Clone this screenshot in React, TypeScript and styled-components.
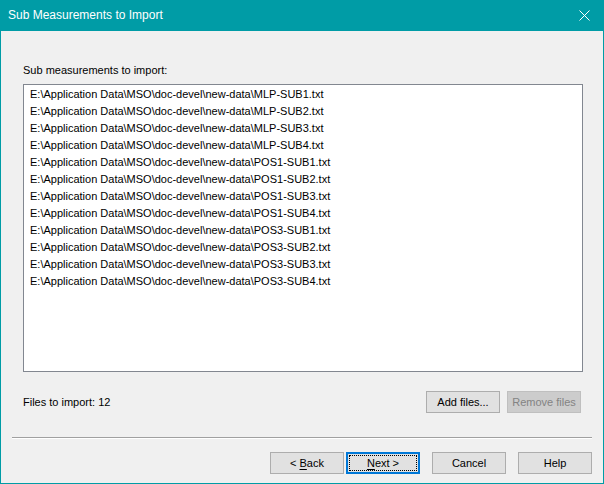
import React from "react";
import styled, { createGlobalStyle, css } from "styled-components";

const GlobalStyle = createGlobalStyle`
    html, body {
        margin: 0;
        padding: 0;
        background: #f0f0f0;
    }
    * {
        box-sizing: border-box;
    }
`;

const files = [
    "MLP-SUB1.txt",
    "MLP-SUB2.txt",
    "MLP-SUB3.txt",
    "MLP-SUB4.txt",
    "POS1-SUB1.txt",
    "POS1-SUB2.txt",
    "POS1-SUB3.txt",
    "POS1-SUB4.txt",
    "POS3-SUB1.txt",
    "POS3-SUB2.txt",
    "POS3-SUB3.txt",
    "POS3-SUB4.txt",
];

const basePath = "E:\\Application Data\\MSO\\doc-devel\\new-data\\";

export default function App() {
    return (
        <>
            <GlobalStyle />
            <Window>
                <TitleBar>
                    <Title>Sub Measurements to Import</Title>
                    <CloseButton>
                        <svg width="11" height="11" viewBox="0 0 11 11">
                            <path d="M0.5 0.5 L10.5 10.5 M10.5 0.5 L0.5 10.5" stroke="#ffffff" strokeWidth="1" fill="none" />
                        </svg>
                    </CloseButton>
                </TitleBar>
                <Body>
                    <Label>Sub measurements to import:</Label>
                    <ListBox>
                        {files.map((f) => (
                            <ListItem key={f}>{basePath + f}</ListItem>
                        ))}
                    </ListBox>
                    <FilesRow>
                        <Label>Files to import: 12</Label>
                        <ButtonGroup>
                            <Button>Add files...</Button>
                            <Button disabled>Remove files</Button>
                        </ButtonGroup>
                    </FilesRow>
                    <Separator />
                    <Footer>
                        <Button>
                            &lt;&nbsp;<u>B</u>ack
                        </Button>
                        <Button $focused>
                            <FocusRing>
                                <u>N</u>ext&nbsp;&gt;
                            </FocusRing>
                        </Button>
                        <Button $spaced>Cancel</Button>
                        <Button $spaced>Help</Button>
                    </Footer>
                </Body>
            </Window>
        </>
    );
}

const Window = styled.div`
    width: 604px;
    height: 484px;
    border: 1px solid #009ca6;
    border-top: none;
    background: #f0f0f0;
    display: flex;
    flex-direction: column;
    font-family: "Liberation Sans", Arial, sans-serif;
    font-size: 11px;
    color: #000000;
`;

const TitleBar = styled.div`
    height: 31px;
    background: #009ca6;
    display: flex;
    align-items: center;
    justify-content: space-between;
    padding: 0 0 1px 8px;
    margin: 0 -1px;
`;

const Title = styled.span`
    color: #ffffff;
    font-size: 12px;
`;

const CloseButton = styled.div`
    width: 46px;
    height: 30px;
    display: flex;
    align-items: center;
    justify-content: center;
    padding-left: 7px;
`;

const Body = styled.div`
    flex: 1;
    display: flex;
    flex-direction: column;
    padding: 0 11px;
`;

const Label = styled.div`
    line-height: 16px;
    margin-left: 11px;
    &:first-child {
        margin-top: 31px;
    }
`;

const ListBox = styled.div`
    margin: 6px 9px 0 11px;
    height: 288px;
    background: #ffffff;
    border: 1px solid #828790;
    padding: 1px 0 0 6px;
`;

const ListItem = styled.div`
    height: 17px;
    line-height: 17px;
    white-space: nowrap;
`;

const FilesRow = styled.div`
    margin-top: 19px;
    display: flex;
    align-items: center;
    justify-content: space-between;
    padding-right: 11px;

    ${Label} {
        margin-top: 0;
    }
`;

const ButtonGroup = styled.div`
    display: flex;
    gap: 7px;
`;

const Button = styled.button<{ $focused?: boolean; $spaced?: boolean }>`
    width: 74px;
    height: 22px;
    padding: 0;
    background: #e1e1e1;
    border: 1px solid #adadad;
    font-family: "Liberation Sans", Arial, sans-serif;
    font-size: 11px;
    color: #000000;
    display: flex;
    align-items: center;
    justify-content: center;
    ${(p) =>
        p.$focused &&
        css`
            border: 2px solid #0078d7;
            padding: 1px;
            margin-left: 2px;
        `}
    ${(p) =>
        p.$spaced &&
        css`
            margin-left: 12px;
        `}
    &:disabled {
        background: #cccccc;
        border-color: #bfbfbf;
        color: #838383;
    }
    u {
        text-decoration-thickness: 1px;
        text-underline-offset: 2px;
    }
`;

const FocusRing = styled.span`
    width: 100%;
    height: 100%;
    border: 1px dotted #000000;
    display: flex;
    align-items: center;
    justify-content: center;
`;

const Separator = styled.div`
    margin-top: 24px;
    height: 1px;
    background: #a0a0a0;
    box-shadow: 0 1px 0 #ffffff;
`;

const Footer = styled.div`
    margin-top: 14px;
    display: flex;
    justify-content: flex-end;
`;
